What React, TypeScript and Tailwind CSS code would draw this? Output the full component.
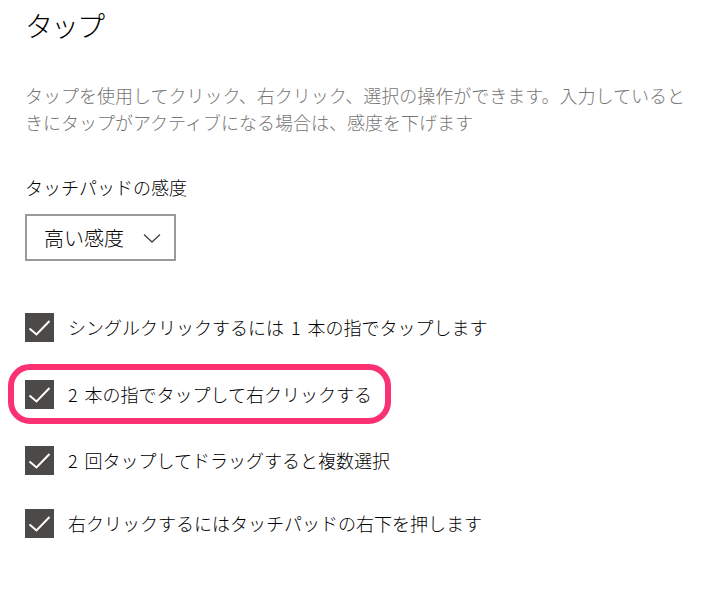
import { useState } from 'react';

const options = [
  { label: 'シングルクリックするには 1 本の指でタップします', gap: 'mt-0', marked: false },
  { label: '2 本の指でタップして右クリックする', gap: 'mt-[38px]', marked: true },
  { label: '2 回タップしてドラッグすると複数選択', gap: 'mt-[37px]', marked: false },
  { label: '右クリックするにはタッチパッドの右下を押します', gap: 'mt-[34px]', marked: false },
];

function Check({ on }: { on: boolean }) {
  return (
    <span className="flex h-[29px] w-[29px] shrink-0 items-center justify-center bg-[#4c4a48]">
      {on && (
        <svg viewBox="0 0 29 29" className="h-[29px] w-[29px]" fill="none">
          <path d="M4.5 15.5 L11.5 21.5 L24.5 8" stroke="#fff" strokeWidth="2" strokeLinejoin="miter" />
        </svg>
      )}
    </span>
  );
}

export default function App() {
  const [checked, setChecked] = useState(options.map(() => true));

  return (
    <div
      className="h-[591px] w-[707px] overflow-hidden bg-white pl-[25px] pt-[7px] font-light text-black"
      style={{ fontFamily: '"Noto Sans CJK JP", "Noto Sans", sans-serif' }}
    >
      <h1 className="text-[28px] leading-[36px] tracking-[-2px]">タップ</h1>

      <p className="mt-[39px] text-[18px] leading-[27px] text-[#767676]">
        タップを使用してクリック、右クリック、選択の操作ができます。入力していると
        <br />
        きにタップがアクティブになる場合は、感度を下げます
      </p>

      <p className="mt-[38px] text-[18px] leading-[26px]">タッチパッドの感度</p>

      <button className="mt-[14px] flex h-[47px] w-[151px] items-center border-2 border-[#9a9a9a] pl-[17px] pr-[13px] text-[20px] leading-none">
        <span>高い感度</span>
        <svg viewBox="0 0 18 10" className="ml-auto h-[10px] w-[18px]" fill="none">
          <path d="M1 1.5 L9 9 L17 1.5" stroke="#444" strokeWidth="1.3" />
        </svg>
      </button>

      <div className="mt-[52px] flex flex-col">
        {options.map((o, i) => (
          <div key={o.label} className={`relative flex items-center gap-[14px] ${o.gap}`}>
            <button onClick={() => setChecked((c) => c.map((v, j) => (j === i ? !v : v)))}>
              <Check on={checked[i]} />
            </button>
            <span className="text-[18px] leading-[29px] [word-spacing:3px]">{o.label}</span>
            {o.marked && (
              <div className="pointer-events-none absolute left-[-17px] top-[-16px] h-[60px] w-[383px] rounded-[22px] border-[6px] border-[#fb3172]" />
            )}
          </div>
        ))}
      </div>
    </div>
  );
}
